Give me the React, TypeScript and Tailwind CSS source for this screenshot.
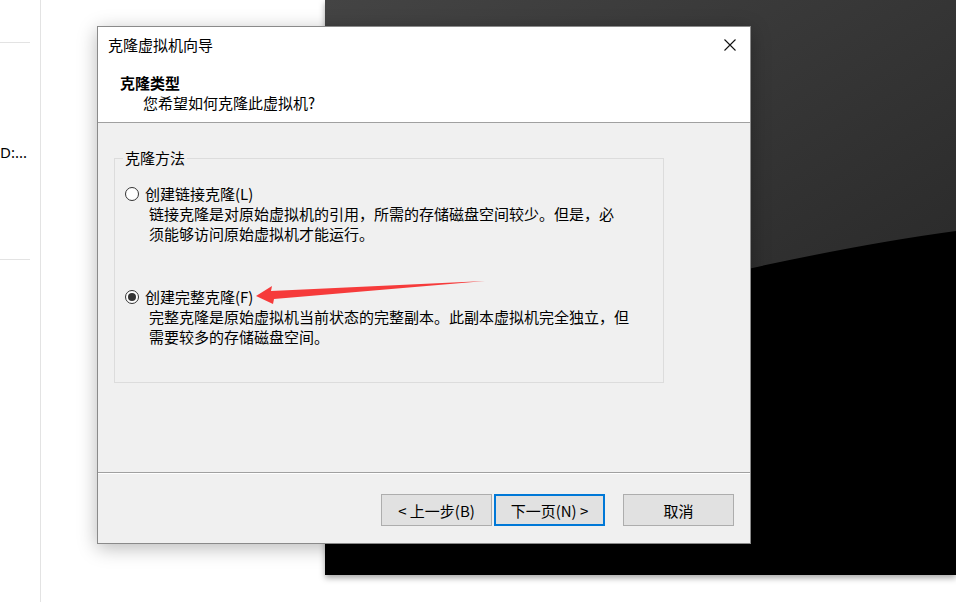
import React from 'react'

// 克隆虚拟机向导 — 第二步：选择克隆类型

const font = { fontFamily: '"Noto Sans CJK SC", "Noto Sans", sans-serif' }

function Radio({ checked }: { checked?: boolean }) {
  return (
    <span className="flex h-[14px] w-[14px] shrink-0 items-center justify-center rounded-full border border-[#333] bg-white">
      {checked && <span className="h-[8px] w-[8px] rounded-full bg-[#333]" />}
    </span>
  )
}

function Option({
  label,
  lines,
  checked,
}: {
  label: string
  lines: string[]
  checked?: boolean
}) {
  return (
    <div className="flex flex-col">
      <label className="flex h-[20px] items-center gap-[6px]">
        <Radio checked={checked} />
        <span>{label}</span>
      </label>
      <div className="pl-[24px]">
        {lines.map((l) => (
          <div key={l} className="h-[20px] whitespace-nowrap">
            {l}
          </div>
        ))}
      </div>
    </div>
  )
}

function Button({ children, primary }: { children: React.ReactNode; primary?: boolean }) {
  return (
    <button
      type="button"
      className={
        'flex h-[32px] w-[111px] items-center justify-center bg-[#e1e1e1] text-[15px] leading-none text-black ' +
        (primary ? 'border-2 border-[#0078d7]' : 'border border-[#adadad]')
      }
    >
      {children}
    </button>
  )
}

function Screen() {
  return (
    <div className="absolute left-[325px] top-0 h-[575px] w-[631px] bg-black shadow-[0_3px_6px_rgba(0,0,0,0.35)]">
      <svg width="631" height="575" viewBox="0 0 631 575" className="block">
        <defs>
          <linearGradient id="glare" x1="0" y1="0" x2="1" y2="1">
            <stop offset="0" stopColor="#444" />
            <stop offset="1" stopColor="#262626" />
          </linearGradient>
        </defs>
        <path d="M0,0 H631 V231 Q400,262 0,380 Z" fill="url(#glare)" />
      </svg>
    </div>
  )
}

function Dialog() {
  return (
    <div
      className="absolute left-[97px] top-[26px] flex h-[518px] w-[654px] flex-col border border-[#8a8a8a] bg-[#f0f0f0] text-[15px] leading-[20px] text-black shadow-[0_4px_18px_rgba(0,0,0,0.28)]"
      style={font}
    >
      <div className="flex h-[96px] flex-col border-b border-[#a0a0a0] bg-white">
        <div className="flex items-center justify-between pl-[10px] pr-[14px] pt-[8px]">
          <span>克隆虚拟机向导</span>
          <svg width="12" height="12" viewBox="0 0 12 12">
            <path d="M0.5,0.5 L11.5,11.5 M11.5,0.5 L0.5,11.5" stroke="#111" strokeWidth="1.1" />
          </svg>
        </div>
        <div className="pl-[22px] pt-[18px] font-bold">克隆类型</div>
        <div className="pl-[45px]">您希望如何克隆此虚拟机?</div>
      </div>

      <div className="flex flex-1 flex-col px-[16px] pt-[25px]">
        <fieldset className="h-[235px] w-[550px] border border-[#dcdcdc] pl-[10px]">
          <legend className="ml-[-2px] px-[2px]">克隆方法</legend>
          <div className="flex flex-col gap-[43px] pt-[16px]">
            <Option
              label="创建链接克隆(L)"
              lines={[
                '链接克隆是对原始虚拟机的引用，所需的存储磁盘空间较少。但是，必',
                '须能够访问原始虚拟机才能运行。',
              ]}
            />
            <Option
              checked
              label="创建完整克隆(F)"
              lines={[
                '完整克隆是原始虚拟机当前状态的完整副本。此副本虚拟机完全独立，但',
                '需要较多的存储磁盘空间。',
              ]}
            />
          </div>
        </fieldset>
      </div>

      <div className="flex h-[71px] items-start border-t border-[#a0a0a0] pr-[16px] pt-[21px] shadow-[inset_0_1px_0_#fff]">
        <div className="ml-auto flex gap-[2px]">
          <Button>&lt; 上一步(B)</Button>
          <Button primary>下一页(N) &gt;</Button>
        </div>
        <div className="ml-[18px]">
          <Button>取消</Button>
        </div>
      </div>
    </div>
  )
}

function Arrow() {
  return (
    <svg
      className="pointer-events-none absolute left-0 top-0"
      width="956"
      height="602"
      viewBox="0 0 956 602"
    >
      <polygon
        points="256,296 272,286 271,291 485,281 274,299 273,304"
        fill="#f63b3b"
      />
    </svg>
  )
}

export default function App() {
  return (
    <div className="relative flex h-[602px] w-[956px] overflow-hidden bg-white" style={font}>
      <aside className="flex h-full w-[41px] shrink-0 flex-col border-r border-[#e3e3e3]">
        <div className="mt-[42px] h-px w-[30px] bg-[#e3e3e3]" />
        <div
          className="mt-[99px] whitespace-nowrap text-[15px] leading-[20px] text-black"
          style={{ fontFamily: '"Noto Sans", sans-serif' }}
        >
          D:...
        </div>
        <div className="mt-[97px] h-px w-[30px] bg-[#e3e3e3]" />
      </aside>
      <div className="flex-1" />
      <Screen />
      <Dialog />
      <Arrow />
    </div>
  )
}
